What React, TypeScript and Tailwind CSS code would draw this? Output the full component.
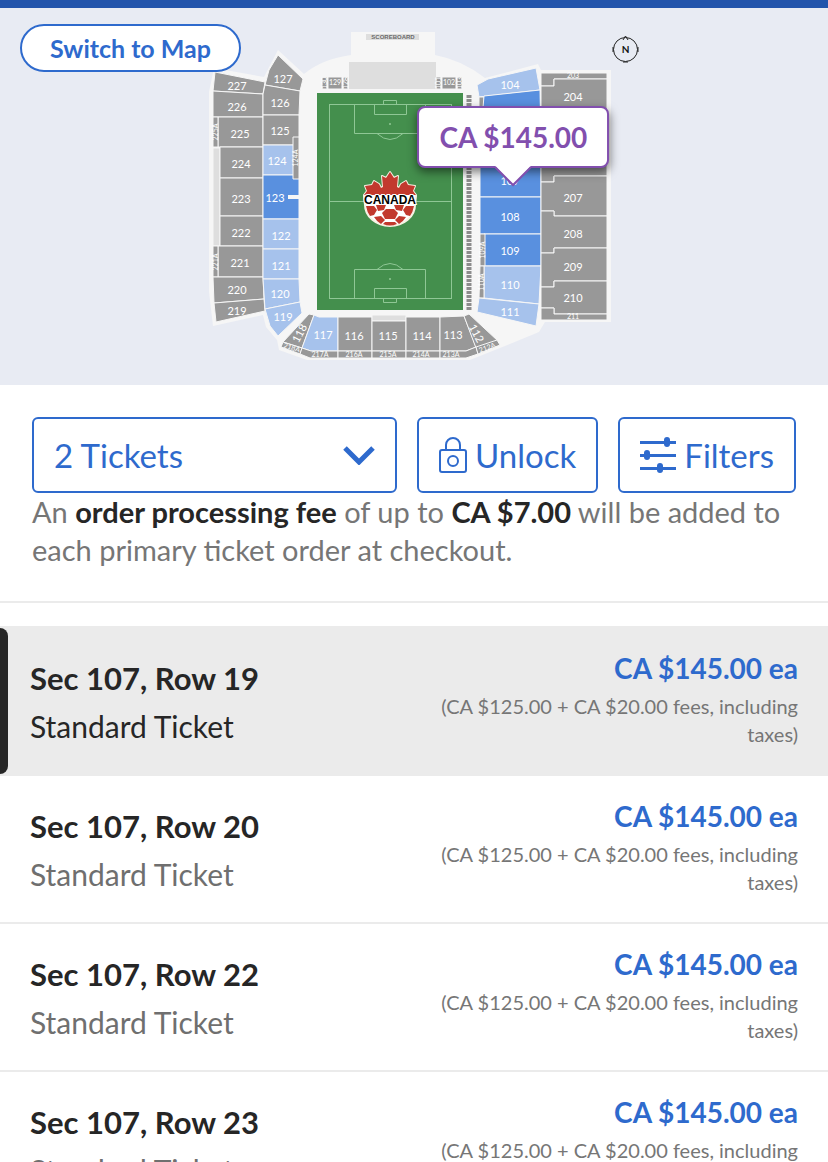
import { useState } from 'react';
import { twMerge } from 'tailwind-merge';

type Tone = 'gray' | 'light' | 'dark' | 'pale';

interface Shape {
  d: string;
  tone: Tone;
}

interface Label {
  text: string;
  x: number;
  y: number;
  rotate?: number;
  small?: boolean;
}

const TONES: Record<Tone, string> = {
  gray: '#989898',
  light: '#a6c2ec',
  dark: '#5990df',
  pale: '#dedede',
};

const SHAPES: Shape[] = [
  // west upper
  { d: '215,72 265,82 263,94 213,91', tone: 'gray' },
  { d: '213,91 263,94 263,117 213,117', tone: 'gray' },
  { d: '218,117 263,117 263,147 218,147', tone: 'gray' },
  { d: '213,117 218,117 218,147 213,147', tone: 'gray' },
  { d: '213,148 220,148 220,246 213,246', tone: 'pale' },
  { d: '220,147 263,147 263,178 220,178', tone: 'gray' },
  { d: '220,178 263,178 263,216 220,216', tone: 'gray' },
  { d: '220,216 263,216 263,246 220,246', tone: 'gray' },
  { d: '218,246 263,246 263,277 218,277', tone: 'gray' },
  { d: '213,246 218,246 218,277 213,277', tone: 'gray' },
  { d: '213,277 263,277 264,299 214,303', tone: 'gray' },
  { d: '214,303 264,299 265,311 216,322', tone: 'gray' },
  // west lower
  { d: '278,55 303,79 300,91 265,85 269,70', tone: 'gray' },
  { d: '265,85 300,91 299,115 263,115 263,94', tone: 'gray' },
  { d: '263,115 299,115 299,145 263,145', tone: 'gray' },
  { d: '263,145 299,145 299,175 263,175', tone: 'light' },
  { d: '263,175 299,175 299,219 263,219', tone: 'dark' },
  { d: '293,137 299,137 299,179 293,179', tone: 'gray' },
  { d: '263,219 299,219 299,249 263,249', tone: 'light' },
  { d: '263,249 299,249 299,279 263,279', tone: 'light' },
  { d: '263,279 299,279 300,302 265,309', tone: 'light' },
  { d: '265,309 300,302 302,313 278,336 270,326', tone: 'light' },
  // south
  { d: '309,314 314,315 302,348 283,342', tone: 'gray' },
  { d: '314,315 319,317 338,317 338,351 311,351 302,348', tone: 'light' },
  { d: '338,317 372,317 372,351 338,351', tone: 'gray' },
  { d: '372,315 406,315 406,321 372,321', tone: 'pale' },
  { d: '372,321 406,321 406,351 372,351', tone: 'gray' },
  { d: '406,317 440,317 440,351 406,351', tone: 'gray' },
  { d: '440,317 464,316 476,347 466,351 440,351', tone: 'gray' },
  { d: '464,316 469,314 498,341 476,348', tone: 'gray' },
  { d: '283,342 302,348 300,354 281,347', tone: 'gray' },
  { d: '302,348 311,351 338,351 338,358 310,358 300,354', tone: 'gray' },
  { d: '338,351 372,351 372,358 338,358', tone: 'gray' },
  { d: '372,351 406,351 406,358 372,358', tone: 'gray' },
  { d: '406,351 440,351 440,358 406,358', tone: 'gray' },
  { d: '440,351 466,351 476,347 478,354 466,358 440,358', tone: 'gray' },
  { d: '476,347 497,340 500,345 478,354', tone: 'gray' },
  // north
  { d: '322,77 327,77 327,89 322,89', tone: 'gray' },
  { d: '328,77 342,77 342,89 328,89', tone: 'gray' },
  { d: '343,77 348,77 348,89 343,89', tone: 'gray' },
  { d: '436,77 441,77 441,89 436,89', tone: 'gray' },
  { d: '442,77 456,77 456,89 442,89', tone: 'gray' },
  { d: '457,77 462,77 462,89 457,89', tone: 'gray' },
  // east lower
  { d: '477,85 488,79 536,68 540,90 479,97', tone: 'light' },
  { d: '479,97 484,97 484,130 479,130', tone: 'gray' },
  { d: '484,96 540,90 541,142 480,142', tone: 'dark' },
  { d: '480,142 541,142 541,197 480,197', tone: 'dark' },
  { d: '480,197 541,197 541,234 480,234', tone: 'dark' },
  { d: '484,234 541,234 541,266 484,266', tone: 'dark' },
  { d: '480,234 485,234 485,266 480,266', tone: 'gray' },
  { d: '484,266 541,266 539,304 484,298', tone: 'light' },
  { d: '480,266 484,266 484,298 479,298', tone: 'gray' },
  { d: '479,298 539,304 536,326 477,312', tone: 'light' },
  // east upper
  { d: '541,73 607,73 607,79 554,79 554,86 541,86', tone: 'gray' },
  { d: '541,86 554,86 554,79 607,79 607,142 541,142', tone: 'gray' },
  { d: '541,142 607,142 607,176 554,176 554,182 541,182', tone: 'gray' },
  { d: '541,182 554,182 554,176 607,176 607,216 554,216 554,211 541,211', tone: 'gray' },
  { d: '541,211 554,211 554,216 607,216 607,248 554,248 554,253 541,253', tone: 'gray' },
  { d: '541,253 554,253 554,248 607,248 607,281 554,281 554,287 541,287', tone: 'gray' },
  { d: '541,287 554,287 554,281 607,281 607,314 554,314 554,308 541,308', tone: 'gray' },
  { d: '541,308 554,308 554,314 607,314 607,320 541,320', tone: 'gray' },
];

const LABELS: Label[] = [
  { text: '227', x: 237, y: 85 },
  { text: '226', x: 237, y: 106 },
  { text: '225', x: 240, y: 133 },
  { text: '224', x: 241, y: 163 },
  { text: '223', x: 241, y: 198 },
  { text: '222', x: 241, y: 232 },
  { text: '221', x: 240, y: 262 },
  { text: '220', x: 237, y: 289 },
  { text: '219', x: 237, y: 310 },
  { text: '127', x: 283, y: 78 },
  { text: '126', x: 280, y: 102 },
  { text: '125', x: 280, y: 130 },
  { text: '124', x: 277, y: 160 },
  { text: '123', x: 275, y: 197 },
  { text: '122', x: 281, y: 235 },
  { text: '121', x: 281, y: 265 },
  { text: '120', x: 280, y: 293 },
  { text: '119', x: 283, y: 316 },
  { text: '118', x: 299, y: 333, rotate: -62 },
  { text: '117', x: 323, y: 334 },
  { text: '116', x: 354, y: 335 },
  { text: '115', x: 388, y: 335 },
  { text: '114', x: 422, y: 335 },
  { text: '113', x: 453, y: 334 },
  { text: '112', x: 477, y: 333, rotate: 62 },
  { text: '104', x: 510, y: 84 },
  { text: '107', x: 510, y: 180 },
  { text: '108', x: 510, y: 216 },
  { text: '109', x: 510, y: 250 },
  { text: '110', x: 510, y: 284 },
  { text: '111', x: 510, y: 311 },
  { text: '204', x: 573, y: 96 },
  { text: '207', x: 573, y: 197 },
  { text: '208', x: 573, y: 233 },
  { text: '209', x: 573, y: 266 },
  { text: '210', x: 573, y: 297 },
  { text: '203', x: 573, y: 75, small: true },
  { text: '211', x: 573, y: 316, small: true },
  { text: '129', x: 335, y: 82, small: true },
  { text: '102', x: 449, y: 82, small: true },
  { text: '130', x: 324, y: 83, rotate: -90, small: true },
  { text: '128', x: 345, y: 83, rotate: -90, small: true },
  { text: '101', x: 438, y: 83, rotate: -90, small: true },
  { text: '103', x: 459, y: 83, rotate: -90, small: true },
  { text: '225A', x: 215, y: 132, rotate: -90, small: true },
  { text: '221A', x: 215, y: 262, rotate: -90, small: true },
  { text: '124A', x: 295, y: 158, rotate: -90, small: true },
  { text: '109A', x: 482, y: 250, rotate: -90, small: true },
  { text: '110A', x: 481, y: 282, rotate: -90, small: true },
  { text: '218A', x: 292, y: 347, rotate: 17, small: true },
  { text: '217A', x: 320, y: 354, small: true },
  { text: '216A', x: 354, y: 354, small: true },
  { text: '215A', x: 388, y: 354, small: true },
  { text: '214A', x: 421, y: 354, small: true },
  { text: '213A', x: 451, y: 354, small: true },
  { text: '212A', x: 487, y: 347, rotate: -20, small: true },
];

const TICKETS = [
  { id: 1, section: '107', row: '19' },
  { id: 2, section: '107', row: '20' },
  { id: 3, section: '107', row: '22' },
  { id: 4, section: '107', row: '23' },
];

const LEAF =
  'M390 172L394 178L398 176L397 187L399 188L401 184L406 181L408 185L415 186L413 191L416 195H364L367 191L365 186L372 185L374 181L379 184L381 188L383 187L382 176L386 178z';

function CanadaCrest() {
  return (
    <g>
      <g stroke="#f7f3e4" strokeWidth="2" strokeLinejoin="round" fill="#fff">
        <path d={LEAF} />
        <path d="M364 196h52l-1 9a25 21 0 0 1-50 0z" />
      </g>
      <path fill="#c2392e" d={LEAF} />
      <path
        fill="#c2392e"
        d="M366 206h8l3 4-3 5-4 1q-3-4-4-10zM414 206h-8l-3 4 3 5 4 1q3-4 4-10zM376 205h10l-2 5-6 1zM404 205h-10l2 5 6 1zM386 209h8l4 4-3 6h-10l-3-6zM374 217l7-1 4 4-4 4q-4-2-7-7zM406 217l-7-1-4 4 4 4q4-2 7-7zM385 222h10l2 2q-7 3-14 0z"
      />
      <path stroke="#fff" strokeWidth="2" d="M365 196h50" />
      <text
        x="390"
        y="204"
        textAnchor="middle"
        className="font-['Liberation_Sans'] text-[12px] font-bold"
        fill="#000"
        stroke="#fff"
        strokeWidth="2"
        paintOrder="stroke"
      >
        CANADA
      </text>
    </g>
  );
}

function Pitch() {
  return (
    <g>
      <rect x="317" y="93" width="146" height="217" fill="#448f4d" />
      <g fill="none" stroke="#8fc795" strokeWidth="1">
        <rect x="329.5" y="104.5" width="122" height="194" />
        <path d="M329.5 201.5h122" />
        <path d="M354.5 104.5v29h71v-29M374.5 104.5v10h32v-10M383.5 104.5v-4h13v4M377 133.5q13 12 26 0" />
        <path d="M354.5 298.5v-29h71v29M374.5 298.5v-10h32v10M383.5 298.5v4h13v-4M377 269.5q13 -12 26 0" />
      </g>
      <circle cx="390" cy="124" r="1" fill="#8fc795" />
      <circle cx="390" cy="279" r="1" fill="#8fc795" />
      <CanadaCrest />
    </g>
  );
}

function SeatMap() {
  return (
    <svg viewBox="0 8 828 377" className="block w-full" role="img" aria-label="Stadium seat map">
      <path
        fill="#f6f6f6"
        d="M214 68L264 77L278 50L304 74Q322 59 351 55V32H435V55Q462 60 485 78L538 64L541 70H611V322H545L539 332L500 348L470 360H307L279 350L277 340L266 327L263 315L213 326L209 292V92z"
      />
      <rect x="349" y="62" width="87" height="27" fill="#dedede" />
      <rect x="366" y="34" width="53" height="6" fill="#dedede" />
      <text x="393" y="39" textAnchor="middle" fill="#6b6b6b" className="font-['Liberation_Sans'] text-[6px] font-bold">
        SCOREBOARD
      </text>
      <Pitch />
      <path d="M469 95V310" stroke="#8d8d8d" strokeWidth="5" strokeDasharray="3 1" />
      {SHAPES.map((shape) => (
        <polygon key={shape.d} points={shape.d} fill={TONES[shape.tone]} stroke="#f6f6f6" strokeWidth="1" />
      ))}
      <rect x="288" y="195" width="12" height="4" fill="#f6f6f6" />
      {LABELS.map(({ text, x, y, rotate = 0, small }) => (
        <text
          key={text}
          transform={`translate(${x} ${y}) rotate(${rotate})`}
          textAnchor="middle"
          dominantBaseline="central"
          fill="#fff"
          className={small ? 'text-[7px]' : 'text-[11px]'}
        >
          {text}
        </text>
      ))}
      {/* Compass */}
      <g stroke="#222" fill="none" strokeWidth="1">
        <circle cx="625.5" cy="49.5" r="12" />
        <path d="M623 40l2.500-4 2.500 4M613 47v5M638 47v5M623 62h5" />
      </g>
      <text x="625.5" y="53" textAnchor="middle" fill="#111" className="text-[10px] font-bold">
        N
      </text>
    </svg>
  );
}

function PriceTag() {
  return (
    <div className="absolute left-[62%] top-[26%] -translate-x-1/2">
      <div className="rounded-lg border-2 border-[#824fae] bg-white px-5 py-2 text-[28px] leading-[42px] font-bold whitespace-nowrap text-[#824fae] shadow-[0_4px_10px_rgba(0,0,0,0.5)]">
        CA $145.00
      </div>
      <svg viewBox="0 0 38 21" className="absolute top-full left-1/2 -mt-0.5 w-[38px] -translate-x-1/2">
        <path d="M1 0h36L19 19z" fill="#fff" />
        <path d="M1 1l18 18L37 1" fill="none" stroke="#824fae" strokeWidth="2" />
      </svg>
    </div>
  );
}

function LockIcon() {
  return (
    <svg viewBox="0 0 28 36" className="w-7" fill="none" stroke="currentColor" strokeWidth="2">
      <rect x="1" y="13" width="26" height="22" rx="2" />
      <path d="M7 13V8a7 7 0 0 1 14 0v5" />
      <circle cx="14" cy="24" r="5" />
    </svg>
  );
}

function SlidersIcon() {
  return (
    <svg viewBox="0 0 36 36" className="w-9" fill="currentColor">
      <path d="M0 4h36v3H0zM0 17h36v3H0zM0 30h36v3H0z" />
      <rect x="24" y="0" width="6" height="10" rx="3" />
      <rect x="4" y="13" width="6" height="10" rx="3" />
      <rect x="17" y="26" width="6" height="10" rx="3" />
    </svg>
  );
}

interface TicketRowProps {
  section: string;
  row: string;
  selected: boolean;
  onSelect: () => void;
}

function TicketRow({ section, row, selected, onSelect }: TicketRowProps) {
  return (
    <li className={twMerge('relative border-b-2 border-[#ebebeb]', selected && 'border-t-2 bg-[#ebebeb]')}>
      {selected && <span className="absolute inset-y-0 left-0 w-2 rounded-r-lg bg-[#262626]" />}
      <button
        type="button"
        onClick={onSelect}
        className="flex w-full items-start justify-between px-[30px] pt-4 pb-6 text-left"
      >
        <span className="mt-2.5 block text-[#262626]">
          <span className="block text-[31px] leading-[48px] font-bold">
            Sec {section}, Row {row}
          </span>
          <span className={twMerge('block text-[30px] leading-[48px] text-[#6f6f6f]', selected && 'text-[#262626]')}>
            Standard Ticket
          </span>
        </span>
        <span className="block w-1/2 text-right">
          <span className="block text-[28px] leading-[48px] font-bold text-[#2e6acd]">CA $145.00 ea</span>
          <span className="block text-[20px] leading-[28px] text-[#767676]">
            (CA $125.00 + CA $20.00 fees, including taxes)
          </span>
        </span>
      </button>
    </li>
  );
}

export default function App() {
  const [selected, setSelected] = useState(1);

  return (
    <div className="h-screen overflow-hidden bg-white font-['Lato',sans-serif] text-[#262626]">
      <header className="h-2 bg-[#2254ab]" />

      <section className="relative bg-[#e8ebf3]">
        <SeatMap />
        <button
          type="button"
          className="absolute top-4 left-5 h-12 rounded-full border-2 border-[#2e6acd] bg-white px-7 text-[25px] leading-[40px] font-bold text-[#2e6acd]"
        >
          Switch to Map
        </button>
        <PriceTag />
      </section>

      <section className="border-b-2 border-[#ebebeb] px-8 py-8">
        <div className="flex gap-5 text-[33px] leading-[40px] text-[#2e6acd]">
          <div className="relative flex-1">
            <select
              aria-label="Number of tickets"
              className="block h-[76px] w-full appearance-none rounded-md border-2 border-[#2e6acd] bg-white px-5"
            >
              <option>2 Tickets</option>
              <option>3 Tickets</option>
              <option>4 Tickets</option>
            </select>
            <svg
              viewBox="0 0 32 20"
              className="pointer-events-none absolute top-7 right-[22px] w-8"
              fill="none"
              stroke="currentColor"
              strokeWidth="5"
            >
              <path d="M2 3l14 14L30 3" />
            </svg>
          </div>
          <button type="button" className="flex h-[76px] items-center gap-2 rounded-md border-2 border-[#2e6acd] px-5">
            <LockIcon />
            Unlock
          </button>
          <button type="button" className="flex h-[76px] items-center gap-2 rounded-md border-2 border-[#2e6acd] px-5">
            <SlidersIcon />
            Filters
          </button>
        </div>
        <p className="text-[29px] leading-[38px] text-[#767676]">
          An <strong className="font-bold text-[#262626]">order processing fee</strong> of up to{' '}
          <strong className="font-bold text-[#262626]">CA $7.00</strong> will be added to each primary ticket order at
          checkout.
        </p>
      </section>

      <ul className="mt-[23px]">
        {TICKETS.map((ticket) => (
          <TicketRow
            key={ticket.id}
            section={ticket.section}
            row={ticket.row}
            selected={ticket.id === selected}
            onSelect={() => setSelected(ticket.id)}
          />
        ))}
      </ul>
    </div>
  );
}
